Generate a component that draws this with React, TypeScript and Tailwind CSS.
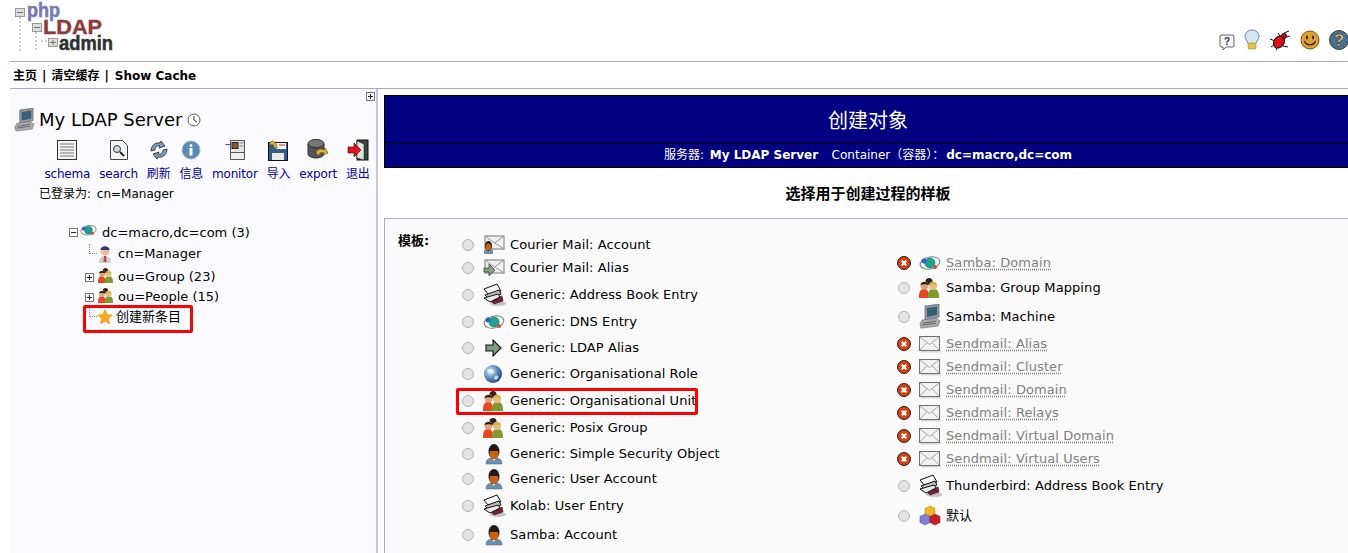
const font = { fontFamily: '"DejaVu Sans", "Noto Sans CJK SC", sans-serif' }

function Envelope() {
  return (
    <svg width="22" height="18" viewBox="0 0 22 18">
      <rect x="2" y="15" width="20" height="2.500" fill="#d8d8d8" />
      <rect x=".5" y="1.500" width="20" height="14" fill="#f2f2f2" stroke="#6f6f6f" />
      <path d="M1 2l9.500 7.500L20 2M1 15l7-7.500M20 15l-7-7.500" fill="none" stroke="#a5a5a5" />
    </svg>
  )
}

function PersonDark({ size = 22 }: { size?: number }) {
  return (
    <svg width={size} height={size} viewBox="0 0 22 22">
      <path d="M3 21c0-5 3-6 8-6s8 1 8 6z" fill="#6d8fae" stroke="#3f5f7d" strokeWidth=".5" />
      <path d="M9 15l2 3 2-3z" fill="#e8eef3" />
      <ellipse cx="11" cy="8.500" rx="5.500" ry="7.500" fill="#1f1a17" />
      <ellipse cx="11" cy="10.500" rx="4.500" ry="5.500" fill="#c8600f" />
      <path d="M7 5c2-2 6-2 8 0v3H7z" fill="#1f1a17" />
    </svg>
  )
}

function MailPerson() {
  return (
    <svg width="22" height="20" viewBox="0 0 22 20">
      <rect x="2" y="1" width="19" height="13" fill="#efefef" stroke="#777" />
      <path d="M2 1l9.500 7 9.500-7M12 8l9 6" fill="none" stroke="#999" />
      <rect x="1" y="15" width="9" height="4" fill="#6d8fae" />
      <ellipse cx="5.500" cy="11" rx="3.500" ry="5" fill="#1f1a17" />
      <ellipse cx="5.500" cy="12" rx="2.800" ry="3.500" fill="#c8600f" />
    </svg>
  )
}

function MailArrow() {
  return (
    <svg width="22" height="18" viewBox="0 0 22 18">
      <rect x="2" y="1" width="19" height="13" fill="#efefef" stroke="#777" />
      <path d="M2 1l9.500 7 9.500-7M12 8l9 6" fill="none" stroke="#999" />
      <path d="M1 9h5V5l6 6-6 6v-4H1z" fill="#7fa37f" stroke="#333" strokeWidth=".7" />
    </svg>
  )
}

function Arrow() {
  return (
    <svg width="22" height="18" viewBox="0 0 22 18">
      <path d="M3 6h7V1l8 8-8 8v-5H3z" fill="#7e9f7e" stroke="#111" strokeWidth="1.100" />
    </svg>
  )
}

function AddressBook() {
  return (
    <svg width="24" height="24" viewBox="0 0 24 24">
      <ellipse cx="15" cy="20.500" rx="8" ry="2.500" fill="#c4c4c4" />
      <path d="M7 17l12-4 1 5-9 3z" fill="#7a1f33" stroke="#222" strokeWidth=".6" />
      <path d="M1 6l13-5 4 7-13 3z" fill="#f5f5f5" stroke="#111" />
      <path d="M2 12l14-5 2 4-12 5z" fill="#bdbdbd" stroke="#111" />
      <path d="M1 15l14-4 2 3-10 5z" fill="#e9e9e9" stroke="#111" />
    </svg>
  )
}

function DnsEntry({ width = 22 }: { width?: number }) {
  return (
    <svg width={width} height={(width * 16) / 22} viewBox="0 0 22 16">
      <ellipse cx="11" cy="8" rx="10" ry="6" fill="#f4f4f4" fillOpacity=".6" stroke="#777" transform="rotate(-12 11 8)" />
      <circle cx="11" cy="8" r="5" fill="#1aa38f" stroke="#0d6a70" strokeWidth=".6" />
      <circle cx="5" cy="6" r="2.500" fill="#2a63c9" />
      <circle cx="16" cy="12" r="2" fill="#d9443c" />
    </svg>
  )
}

function Globe() {
  return (
    <svg width="20" height="20" viewBox="0 0 20 20">
      <defs>
        <radialGradient id="globe-fill" cx="35%" cy="35%" r="70%">
          <stop offset="0" stopColor="#e4eef7" />
          <stop offset=".55" stopColor="#5a8dbf" />
          <stop offset="1" stopColor="#1c4a80" />
        </radialGradient>
      </defs>
      <circle cx="10" cy="10" r="9" fill="url(#globe-fill)" />
      <path d="M4 6c3-2 6-1 7 1s-3 3-5 2zM12 12c2-1 4 0 3 2s-3 2-4 1z" fill="#f3f7fb" fillOpacity=".8" />
    </svg>
  )
}

function Group({ size = 20 }: { size?: number }) {
  return (
    <svg width={size} height={size} viewBox="0 0 20 20">
      <circle cx="10" cy="3.500" r="3.500" fill="#2a2320" />
      <path d="M0 20c0-6 1-9 5-9s5 3 5 9z" fill="#e8481c" />
      <circle cx="5.500" cy="7.500" r="4" fill="#e0a27a" />
      <path d="M1.500 7c0-4 8-4 8 0-2-1-6-1-8 0z" fill="#1d1d1d" />
      <path d="M9 20c0-6 1-9 5.500-9s5.500 3 5.500 9z" fill="#7f9a2e" />
      <circle cx="14" cy="8" r="4" fill="#e6bd85" />
      <path d="M10 7.500c0-5 8-5 8 0-2-1-6-1-8 0z" fill="#d9b13a" />
    </svg>
  )
}

function Computer({ size = 22 }: { size?: number }) {
  return (
    <svg width={size} height={size * 1.1} viewBox="0 0 22 24">
      <path d="M6 2l14-2v13l-14 3z" fill="#8f9ba6" stroke="#555" strokeWidth=".6" />
      <path d="M8 4l10-1.500v8.500l-10 2z" fill="#3a5f75" />
      <path d="M3 16l14-2 4 3-2 5-17 2-1-4z" fill="#a9acab" stroke="#666" strokeWidth=".6" />
      <path d="M4 19l13-2M3 21l14-2" stroke="#666" />
    </svg>
  )
}

function Cubes() {
  return (
    <svg width="22" height="22" viewBox="0 0 22 22">
      <path d="M11 1l5 2.500v5L11 11 6 8.500v-5z" fill="#f4b81f" stroke="#a67c10" strokeWidth=".5" />
      <path d="M6 9l5 2.500v6L6 20l-5-2.500v-6z" fill="#7f7fd0" stroke="#4a4a90" strokeWidth=".5" />
      <path d="M16 9l5 2.500v6L16 20l-5-2.500v-6z" fill="#c4202c" stroke="#7b1018" strokeWidth=".5" />
    </svg>
  )
}

function Star() {
  return (
    <svg width="16" height="16" viewBox="0 0 16 16">
      <path d="M8 .5l2.300 5 5.200.600-3.900 3.500 1.100 5.400L8 12.200 3.300 15l1.100-5.400L.5 6.100l5.200-.6z" fill="#f7a81b" stroke="#e69512" strokeWidth=".5" />
    </svg>
  )
}

function Radio() {
  return <span className="ml-[1px] block h-[12px] w-[12px] shrink-0 rounded-full border border-[#b5b5b5] bg-[#e3e3e3]" />
}

function Unavailable() {
  return (
    <svg className="shrink-0" width="14" height="14" viewBox="0 0 14 14">
      <circle cx="7" cy="7" r="6.500" fill="#d8400f" stroke="#222" />
      <path d="M4.700 4.700l4.600 4.600M9.300 4.700l-4.600 4.600" stroke="#fff" strokeWidth="2.200" />
    </svg>
  )
}

function TreeBox({ open }: { open?: boolean }) {
  return (
    <svg className="shrink-0" width="9" height="9" viewBox="0 0 9 9">
      <rect x=".5" y=".5" width="8" height="8" fill="#fff" stroke="#777" />
      <path d="M2 4.500h5" stroke="#222" />
      {!open && <path d="M4.500 2v5" stroke="#222" />}
    </svg>
  )
}

function Elbow() {
  return <span className="block h-[10px] w-[8px] shrink-0 -translate-y-[5px] border-b border-l border-dotted border-[#888]" />
}

function Logo() {
  return (
    <svg width="114" height="60" viewBox="0 0 114 60">
      <path d="M20 17v34M36 32v19M41 41h8" stroke="#ccc" strokeWidth="2" strokeDasharray="2 2" fill="none" />
      <rect x="15.500" y="8.500" width="9" height="8" fill="#ddd" stroke="#999" />
      <rect x="32.500" y="23.500" width="9" height="8" fill="#ddd" stroke="#999" />
      <rect x="48.500" y="38.500" width="9" height="8" fill="#ddd" stroke="#999" />
      <path d="M17 12.500h6M34 27.500h6M50 42.500h6M53 40v5" stroke="#777" />
      <text x="27" y="17" fontFamily="Liberation Sans" fontWeight="700" fontSize="20" fill="#7479b4" stroke="#7479b4" strokeWidth=".5" textLength="33" lengthAdjust="spacingAndGlyphs">php</text>
      <text x="43" y="34" fontFamily="Liberation Sans" fontWeight="700" fontSize="21" fill="#8d3a3c" stroke="#8d3a3c" strokeWidth=".4" textLength="59" lengthAdjust="spacingAndGlyphs">LDAP</text>
      <text x="59" y="50" fontFamily="Liberation Sans" fontWeight="700" fontSize="21" fill="#2f2f2f" stroke="#2f2f2f" strokeWidth=".5" textLength="54" lengthAdjust="spacingAndGlyphs">admin</text>
    </svg>
  )
}

function HeaderIcons() {
  return (
    <div className="flex items-end gap-[9px]">
      <svg width="16" height="17" viewBox="0 0 16 17">
        <path d="M2 1h12l1 1v10l-1 1H7l-3 3v-3H2l-1-1V2z" fill="#f6f6f6" stroke="#666" />
        <text x="8" y="11" fontFamily="Liberation Sans" fontWeight="700" fontSize="10" textAnchor="middle" fill="#333">?</text>
      </svg>
      <svg width="16" height="22" viewBox="0 0 16 22">
        <path d="M8 1c4 0 7 3 7 6.500 0 3-2.500 4-3 7H4c-.5-3-3-4-3-7C1 4 4 1 8 1z" fill="#d5e6f7" stroke="#5c88bd" />
        <rect x="4" y="14" width="8" height="6" rx="1" fill="#e7c04e" stroke="#a9882b" strokeWidth=".6" />
      </svg>
      <svg width="22" height="21" viewBox="0 0 22 21">
        <path d="M1 9l5 2M2 17l4-3M7 20l2-4M15 3l5-2M17 7l4-1M14 16l5 1M9 3l2 3" stroke="#111" />
        <ellipse cx="10" cy="12" rx="5" ry="6.500" fill="#e0101a" stroke="#111" transform="rotate(35 10 12)" />
        <circle cx="15" cy="6" r="2.500" fill="#d80f18" stroke="#111" />
      </svg>
      <svg width="20" height="21" viewBox="0 0 20 21">
        <circle cx="10" cy="10" r="9" fill="#e0a02e" stroke="#7a5410" />
        <ellipse cx="7" cy="7.500" rx="1" ry="2" fill="#222" />
        <ellipse cx="13" cy="7.500" rx="1" ry="2" fill="#222" />
        <path d="M4.500 11c1.500 5 9.500 5 11 0" fill="none" stroke="#222" strokeWidth="1.200" />
      </svg>
      <svg className="-mr-[1px]" width="20" height="22" viewBox="0 0 20 22">
        <circle cx="10" cy="11" r="9.500" fill="#49718f" stroke="#2b4458" />
        <text x="10" y="17" fontFamily="Liberation Sans" fontWeight="700" fontSize="17" textAnchor="middle" fill="#f0d27c" stroke="#222" strokeWidth=".5">?</text>
      </svg>
    </div>
  )
}

const tools = [
  {
    label: 'schema',
    icon: (
      <svg width="22" height="22" viewBox="0 0 22 22">
        <rect x="1.500" y="1.500" width="19" height="19" fill="#f5f5f5" stroke="#333" />
        <path d="M4 5h14M4 8h14M4 11h14M4 14h14M4 17h14" stroke="#777" />
      </svg>
    ),
  },
  {
    label: 'search',
    icon: (
      <svg width="20" height="22" viewBox="0 0 20 22">
        <path d="M1.500 1.500h12l5 5v14h-17z" fill="#f4f4f4" stroke="#444" />
        <circle cx="8" cy="10" r="3.500" fill="#cfd8df" stroke="#333" />
        <path d="M11 13l4 4" stroke="#222" strokeWidth="2" />
      </svg>
    ),
  },
  {
    label: '刷新',
    icon: (
      <svg width="22" height="22" viewBox="0 0 22 22">
        <path d="M3 12c0-5 4-9 9-8l1-2 4 5-6 2 1-2c-3-1-5 1-5 4z" fill="#7c9cc0" stroke="#222" strokeWidth=".8" />
        <path d="M19 10c0 5-4 9-9 8l-1 2-4-5 6-2-1 2c3 1 5-1 5-4z" fill="#7c9cc0" stroke="#222" strokeWidth=".8" />
      </svg>
    ),
  },
  {
    label: '信息',
    icon: (
      <svg width="20" height="20" viewBox="0 0 20 20">
        <circle cx="10" cy="10" r="9" fill="#5b8bb5" stroke="#9fb9cf" />
        <circle cx="10" cy="5.500" r="1.500" fill="#fff" />
        <rect x="8.500" y="8" width="3" height="7.500" fill="#fff" />
      </svg>
    ),
  },
  {
    label: 'monitor',
    icon: (
      <svg width="22" height="22" viewBox="0 0 22 22">
        <path d="M1.500 5.500h5v15h14v-7h-14" fill="#eee" stroke="#555" />
        <rect x="6.500" y="1.500" width="14" height="12" fill="#e6e6e6" stroke="#555" />
        <rect x="8" y="3.500" width="6" height="6" fill="#8a5a3a" stroke="#222" />
        <path d="M15.500 4h4M15.500 7h4" stroke="#888" />
      </svg>
    ),
  },
  {
    label: '导入',
    icon: (
      <svg width="22" height="22" viewBox="0 0 22 22">
        <rect x="1.500" y="3.500" width="19" height="18" fill="#2f5f86" stroke="#111" />
        <rect x="9" y="4" width="10" height="6" fill="#f4f4f4" />
        <path d="M12 6h6" stroke="#d23" />
        <rect x="5" y="14" width="12" height="7" fill="#e9e9e9" />
        <path d="M10 9c0-4-2-7-5-7L2 5l2 1c2-1 3 0 3 3z" fill="#e2b33a" stroke="#6d5210" strokeWidth=".7" />
      </svg>
    ),
  },
  {
    label: 'export',
    icon: (
      <svg width="22" height="22" viewBox="0 0 22 22">
        <ellipse cx="9" cy="4.500" rx="8" ry="4" fill="#777" stroke="#333" />
        <path d="M1 5v10c0 2 3.500 4 8 4s8-2 8-4V5c0 2-3.500 4-8 4S1 7 1 5z" fill="#555" stroke="#333" />
        <path d="M9 14c1-4 5-5 8-3l1-2 3 5-5 2 1-2c-3-1-5 0-5 3z" fill="#e4b437" stroke="#6d5210" strokeWidth=".7" />
      </svg>
    ),
  },
  {
    label: '退出',
    icon: (
      <svg width="22" height="22" viewBox="0 0 22 22">
        <rect x="10" y="1" width="11" height="20" fill="#33493a" stroke="#111" />
        <path d="M10 2l7 3v16l-7-2z" fill="#dfe5df" stroke="#222" strokeWidth=".6" />
        <path d="M1 8h6V4l7 7-7 7v-4H1z" fill="#e0161c" stroke="#300" strokeWidth=".6" />
      </svg>
    ),
  },
]

type Template = {
  name: string
  icon: React.ReactNode
  height: string
  off?: boolean
  marked?: boolean
}

const leftTemplates: Template[] = [
  { name: 'Courier Mail: Account', icon: <MailPerson />, height: 'h-[23px]' },
  { name: 'Courier Mail: Alias', icon: <MailArrow />, height: 'h-[24px]' },
  { name: 'Generic: Address Book Entry', icon: <AddressBook />, height: 'h-[29px]' },
  { name: 'Generic: DNS Entry', icon: <DnsEntry />, height: 'h-[26px]' },
  { name: 'Generic: LDAP Alias', icon: <Arrow />, height: 'h-[25px]' },
  { name: 'Generic: Organisational Role', icon: <Globe />, height: 'h-[27px]' },
  { name: 'Generic: Organisational Unit', icon: <Group />, height: 'h-[27px]', marked: true },
  { name: 'Generic: Posix Group', icon: <Group />, height: 'h-[27px]' },
  { name: 'Generic: Simple Security Object', icon: <PersonDark />, height: 'h-[26px]' },
  { name: 'Generic: User Account', icon: <PersonDark />, height: 'h-[24px]' },
  { name: 'Kolab: User Entry', icon: <AddressBook />, height: 'h-[30px]' },
  { name: 'Samba: Account', icon: <PersonDark />, height: 'h-[28px]' },
]

const rightTemplates: Template[] = [
  { name: 'Samba: Domain', icon: <DnsEntry />, height: 'h-[25px]', off: true },
  { name: 'Samba: Group Mapping', icon: <Group />, height: 'h-[25px]' },
  { name: 'Samba: Machine', icon: <Computer />, height: 'h-[33px]' },
  { name: 'Sendmail: Alias', icon: <Envelope />, height: 'h-[22px]', off: true },
  { name: 'Sendmail: Cluster', icon: <Envelope />, height: 'h-[23px]', off: true },
  { name: 'Sendmail: Domain', icon: <Envelope />, height: 'h-[23px]', off: true },
  { name: 'Sendmail: Relays', icon: <Envelope />, height: 'h-[23px]', off: true },
  { name: 'Sendmail: Virtual Domain', icon: <Envelope />, height: 'h-[23px]', off: true },
  { name: 'Sendmail: Virtual Users', icon: <Envelope />, height: 'h-[23px]', off: true },
  { name: 'Thunderbird: Address Book Entry', icon: <AddressBook />, height: 'h-[32px]' },
  { name: '默认', icon: <Cubes />, height: 'h-[28px]' },
]

function TemplateRow({ item }: { item: Template }) {
  return (
    <div className={`relative flex items-center ${item.height}`}>
      <div className="flex w-[22px] shrink-0 justify-start">{item.off ? <Unavailable /> : <Radio />}</div>
      <div className="flex w-[27px] shrink-0 items-center justify-start">{item.icon}</div>
      <span
        className={
          item.off
            ? 'whitespace-nowrap text-[13px] tracking-[0.08px] text-[#808080] underline decoration-dotted underline-offset-2'
            : 'whitespace-nowrap text-[13px] tracking-[0.08px] text-black'
        }
      >
        {item.name}
      </span>
      {item.marked && (
        <div className="absolute -left-[5px] top-[1px] h-[27px] w-[242px] rounded-[2px] border-[3px] border-[#ff0000]" />
      )}
    </div>
  )
}

export default function App() {
  return (
    <div className="h-[553px] w-[1348px] overflow-hidden bg-white pl-[10px] text-black" style={font}>
      {/* top bar */}
      <div className="flex h-[62px] items-end justify-between border-b border-[#aaaacc] pb-[10px]">
        <div className="-ml-[10px] self-start">
          <Logo />
        </div>
        <HeaderIcons />
      </div>
      <div className="flex h-[27px] items-center gap-[5px] border-b border-[#aaaacc] pl-[3px] pt-[2px] text-[12px] font-bold">
        <span>主页</span>
        <span>|</span>
        <span>清空缓存</span>
        <span>|</span>
        <span className="ml-[1px]">Show Cache</span>
      </div>

      <div className="flex h-[465px]">
        {/* server tree */}
        <aside className="relative w-[368px] shrink-0 border-r-2 border-[#c5c5dd] bg-[#fbfbff] pt-[19px]">
          <div className="absolute right-[1px] top-[3px]">
            <TreeBox />
          </div>
          <div className="flex h-[24px] items-center pl-[4px]">
            <Computer size={21} />
            <span className="ml-[4px] text-[18px] leading-none">My LDAP Server</span>
            <svg className="ml-[5px]" width="14" height="14" viewBox="0 0 14 14">
              <circle cx="7" cy="7" r="6" fill="#fff" stroke="#555" />
              <path d="M7 3v4l3 2" fill="none" stroke="#333" />
            </svg>
          </div>
          <div className="mt-[6px] flex pl-[30px]">
            {tools.map((tool) => (
              <div key={tool.label} className="flex flex-col items-center px-[4.5px]">
                <div className="flex h-[24px] items-center">{tool.icon}</div>
                <span className="mt-[3px] whitespace-nowrap text-[12px] leading-[18px] tracking-[-0.2px] text-[#000099]">
                  {tool.label}
                </span>
              </div>
            ))}
          </div>
          <div className="mt-[2px] pl-[29px] text-[12px] leading-[18px]">
            已登录为:<span className="ml-[2px]"> cn=Manager</span>
          </div>

          <div className="mt-[19px] pl-[59px] text-[13px]">
            <div className="flex h-[21px] items-center">
              <TreeBox open />
              <span className="ml-[2px] -translate-y-[2px]">
                <DnsEntry width={17} />
              </span>
              <span className="ml-[5px]">dc=macro,dc=com (3)</span>
            </div>
            <div className="flex h-[22px] items-center pl-[20px]">
              <Elbow />
              <svg width="16" height="18" viewBox="0 0 16 18">
                <path d="M2 18c0-5 2-7 6-7s6 2 6 7z" fill="#c9ced6" />
                <path d="M7 11h2l.5 6h-3z" fill="#d13a3a" />
                <circle cx="8" cy="6" r="4.500" fill="#e9bd98" />
                <path d="M3.500 5c0-5 9-5 9 0z" fill="#2c3a8c" />
              </svg>
              <span className="ml-[5px]">cn=Manager</span>
            </div>
            <div className="flex h-[24px] items-center pl-[16px]">
              <TreeBox />
              <span className="ml-[4px] -translate-y-[2px]">
                <Group size={15} />
              </span>
              <span className="ml-[5px]">ou=Group (23)</span>
            </div>
            <div className="flex h-[16px] items-center pl-[16px]">
              <TreeBox />
              <span className="ml-[4px] -translate-y-[2px]">
                <Group size={15} />
              </span>
              <span className="ml-[5px]">ou=People (15)</span>
            </div>
            <div className="relative flex h-[24px] items-center pl-[20px]">
              <Elbow />
              <Star />
              <span className="ml-[3px]">创建新条目</span>
              <div className="absolute left-[14px] top-0 h-[28px] w-[110px] rounded-[2px] border-[3px] border-[#ff0000]" />
            </div>
          </div>
        </aside>

        {/* create object panel */}
        <main className="ml-[6px] w-[968px] shrink-0 pt-[6px]">
          <div className="border border-black bg-[#000080] text-white">
            <div className="flex h-[47px] items-center justify-center border-b border-black pt-[3px] text-[20px]">创建对象</div>
            <div className="flex h-[24px] items-center justify-center gap-[2px] whitespace-pre text-[12px]">
              <span>服务器: </span>
              <b>My LDAP Server</b>
              <span>   Container（容器）：</span>
              <b>dc=macro,dc=com</b>
            </div>
          </div>
          <div className="flex h-[50px] items-center justify-center pt-[2px] text-[15px] font-bold leading-none">
            选择用于创建过程的样板
          </div>
          <div className="flex h-[340px] border-l border-t border-[#aaaadd] bg-[#fafafa]">
            <div className="w-[76px] shrink-0 pl-[13px] pt-[13px] text-[13px] font-bold leading-[18px]">模板:</div>
            <div className="w-[436px] shrink-0 pt-[14px]">
              {leftTemplates.map((item) => (
                <TemplateRow key={item.name} item={item} />
              ))}
            </div>
            <div className="pt-[31px]">
              {rightTemplates.map((item) => (
                <TemplateRow key={item.name} item={item} />
              ))}
            </div>
          </div>
        </main>
      </div>
    </div>
  )
}
